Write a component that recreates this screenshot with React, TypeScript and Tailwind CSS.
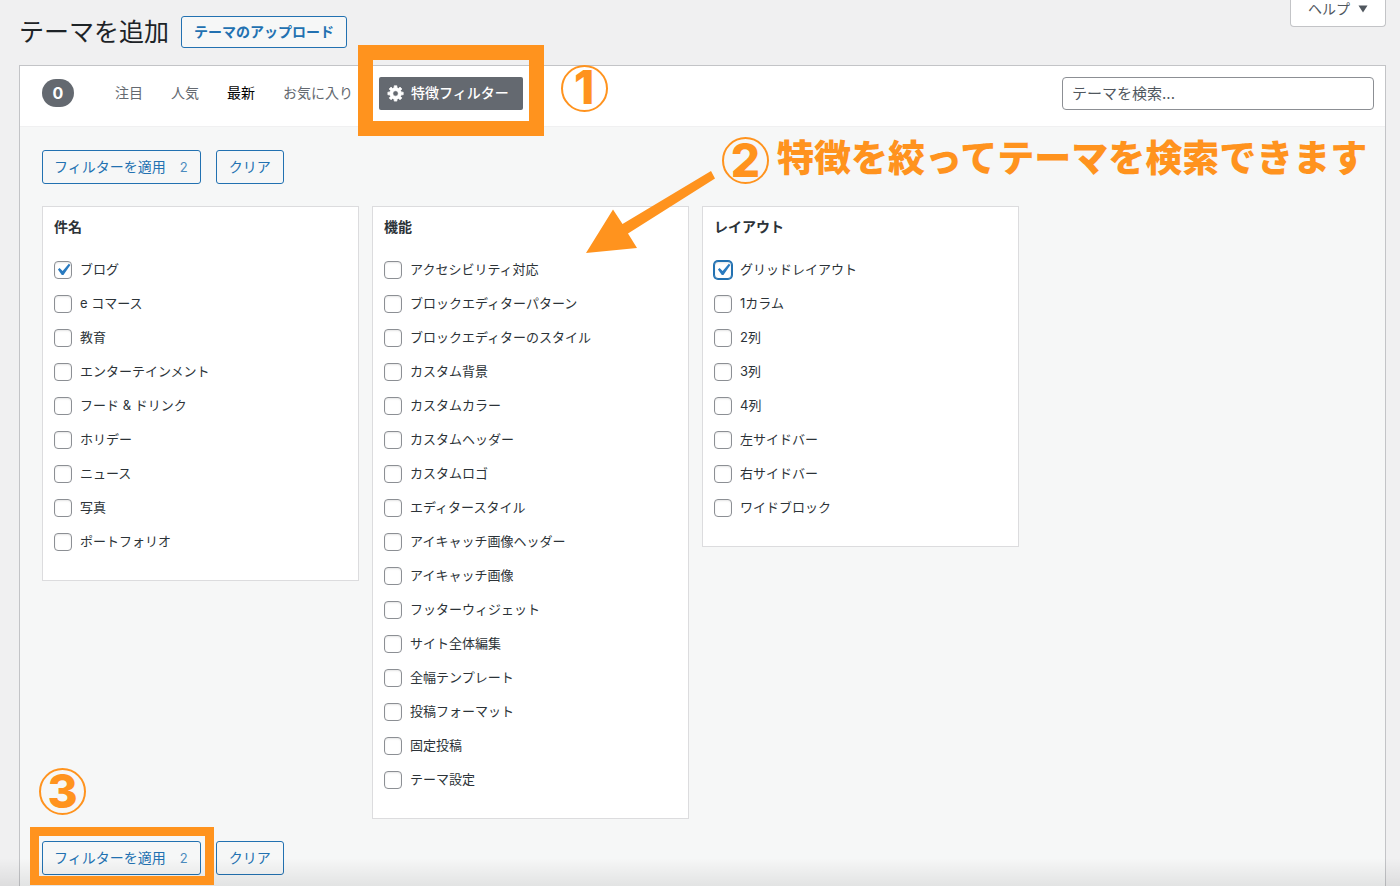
import { useState } from "react";
import clsx from "clsx";

const groups = [
  {
    title: "件名",
    items: [
      "ブログ",
      "e コマース",
      "教育",
      "エンターテインメント",
      "フード & ドリンク",
      "ホリデー",
      "ニュース",
      "写真",
      "ポートフォリオ",
    ],
  },
  {
    title: "機能",
    items: [
      "アクセシビリティ対応",
      "ブロックエディターパターン",
      "ブロックエディターのスタイル",
      "カスタム背景",
      "カスタムカラー",
      "カスタムヘッダー",
      "カスタムロゴ",
      "エディタースタイル",
      "アイキャッチ画像ヘッダー",
      "アイキャッチ画像",
      "フッターウィジェット",
      "サイト全体編集",
      "全幅テンプレート",
      "投稿フォーマット",
      "固定投稿",
      "テーマ設定",
    ],
  },
  {
    title: "レイアウト",
    items: [
      "グリッドレイアウト",
      "1カラム",
      "2列",
      "3列",
      "4列",
      "左サイドバー",
      "右サイドバー",
      "ワイドブロック",
    ],
  },
];

const tabs = ["注目", "人気", "最新", "お気に入り"];

const GearIcon = () => (
  <svg
    viewBox="0 0 20 20"
    className="size-[18px] fill-current stroke-current stroke-[0.8]"
    aria-hidden="true"
  >
    <path d="M18 12h-2.18c-.17.7-.44 1.35-.81 1.93l1.54 1.54-2.1 2.1-1.54-1.54c-.58.36-1.23.63-1.91.79V19H8v-2.18c-.68-.16-1.33-.43-1.91-.79l-1.54 1.54-2.12-2.12 1.54-1.54c-.36-.58-.63-1.23-.79-1.91H1V9.03h2.17c.16-.7.44-1.35.8-1.94L2.43 5.55l2.1-2.1 1.54 1.54c.58-.37 1.24-.64 1.93-.81V2h3v2.18c.68.16 1.33.43 1.91.79l1.54-1.54 2.12 2.12-1.54 1.54c.36.59.64 1.24.8 1.94H18V12zm-8.5 1.5c1.66 0 3-1.34 3-3s-1.34-3-3-3-3 1.34-3 3 1.34 3 3 3z" />
  </svg>
);

const StepNumber = ({ n }: { n: number }) => (
  <span className="flex size-[47px] shrink-0 items-center justify-center rounded-full border-2 border-[#ff931e] pb-0.5 text-[46px] leading-none font-extrabold text-[#ff931e]">
    {n}
  </span>
);

const FilterCheckbox = ({
  label,
  checked,
  focused,
  onChange,
}: {
  label: string;
  checked: boolean;
  focused: boolean;
  onChange: () => void;
}) => (
  <label className="flex h-[34px] items-center gap-2 text-[13px] text-[#2c3338]">
    <span className="relative size-[18px] shrink-0">
      <input
        type="checkbox"
        checked={checked}
        onChange={onChange}
        className={clsx(
          "block size-[18px] appearance-none rounded border bg-white shadow-[inset_0_1px_2px_rgba(0,0,0,0.1)]",
          focused ? "border-[#2271b1] ring-1 ring-[#2271b1]" : "border-[#8c8f94]",
        )}
      />
      {checked && (
        <svg
          viewBox="0 0 20 20"
          className="pointer-events-none absolute -inset-[3px] size-6 fill-[#2a7bc0]"
          aria-hidden="true"
        >
          <path d="M14.83 4.89l1.34.94-5.81 8.38H9.02L5.78 9.67l1.34-1.25 2.57 2.4z" />
        </svg>
      )}
    </span>
    {label}
  </label>
);

const FilterButtons = ({
  count,
  onClear,
  highlighted = false,
}: {
  count: number;
  onClear: () => void;
  highlighted?: boolean;
}) => (
  <div className="flex gap-[15px] text-sm text-[#2271b1]">
    <div className="relative">
      <button
        type="button"
        className="flex h-[34px] items-center gap-3.5 rounded-[3px] border border-[#2271b1] bg-[#f6f7f7] pr-3 pl-[11px]"
      >
        フィルターを適用
        <span className="text-[13px] opacity-80">{count}</span>
      </button>
      {highlighted && (
        <div className="pointer-events-none absolute -top-3.5 -right-[13px] -bottom-2.5 -left-3 z-10 border-9 border-[#ff931e]" />
      )}
    </div>
    <button
      type="button"
      onClick={onClear}
      className="h-[34px] rounded-[3px] border border-[#2271b1] bg-[#f6f7f7] px-3"
    >
      クリア
    </button>
  </div>
);

export default function App() {
  const [tab, setTab] = useState("最新");
  const [selected, setSelected] = useState(["ブログ", "グリッドレイアウト"]);
  const [lastToggled, setLastToggled] = useState("グリッドレイアウト");

  const toggle = (item: string) => {
    setSelected((prev) =>
      prev.includes(item) ? prev.filter((s) => s !== item) : [...prev, item],
    );
    setLastToggled(item);
  };

  const clear = () => setSelected([]);

  return (
    <div className="relative flex min-h-screen flex-col overflow-hidden bg-[#f0f0f1] pr-3.5 pl-[19px] font-['Inter','Noto_Sans_CJK_JP',sans-serif] text-[#2c3338]">
      <header className="flex h-[65px] items-start justify-between">
        <div className="flex items-center gap-3 pt-4">
          <h1 className="text-[25px] leading-8 text-[#1d2327]">テーマを追加</h1>
          <button
            type="button"
            className="h-8 rounded-[3px] border border-[#2271b1] bg-[#f6f7f7] px-3 text-sm font-bold text-[#2271b1]"
          >
            テーマのアップロード
          </button>
        </div>
        <button
          type="button"
          className="flex h-[27px] items-center gap-2 rounded-b border border-t-0 border-[#c3c4c7] bg-white px-[17px] pb-2 text-sm text-[#50575e]"
        >
          ヘルプ
          <svg viewBox="0 0 10 8" className="h-2 w-2.5 fill-current" aria-hidden="true">
            <path d="M0.5 0.5h9L5 7.5z" />
          </svg>
        </button>
      </header>

      <main className="flex-1 border border-b-0 border-[#c3c4c7] bg-[#f6f7f7]">
        <div className="flex h-[61px] items-center border-b border-[#f0f0f1] bg-white pr-[11px] pb-1.5 pl-[22px]">
          <span className="flex h-7 w-8 items-center justify-center rounded-full bg-[#646970] text-base font-bold text-white">
            0
          </span>
          <nav className="ml-[41px] flex gap-7 text-sm">
            {tabs.map((name) => (
              <a
                key={name}
                href="#"
                onClick={() => setTab(name)}
                className={tab === name ? "text-black" : "text-[#646970]"}
              >
                {name}
              </a>
            ))}
          </nav>
          <div className="relative ml-[26px]">
            <button
              type="button"
              className="flex h-[33px] items-center gap-1.5 rounded-xs bg-[#646970] pr-3.5 pl-2 text-sm font-medium text-white"
            >
              <GearIcon />
              特徴フィルター
            </button>
            {/* Step 1 */}
            <div className="pointer-events-none absolute -inset-x-[21px] -top-8 -bottom-[26px] z-10 border-15 border-[#ff931e]" />
            <div className="absolute -top-3 left-full z-10 ml-[38px]">
              <StepNumber n={1} />
            </div>
          </div>
          <input
            type="search"
            aria-label="テーマを検索"
            placeholder="テーマを検索..."
            className="ml-auto h-[33px] w-[312px] rounded border border-[#8c8f94] bg-white px-[9px] text-[15px] placeholder:text-[#50575e]"
          />
        </div>

        <div className="relative px-[22px] pt-[23px] pb-[11px]">
          <FilterButtons count={selected.length} onClear={clear} />

          <div className="my-[22px] flex items-start gap-[13px]">
            {groups.map((group) => (
              <fieldset
                key={group.title}
                className="w-[24%] border border-[#dcdcde] bg-white px-[11px] pt-2.5 pb-[21px]"
              >
                <legend className="float-left mb-4 w-full text-sm leading-5 font-bold">
                  {group.title}
                </legend>
                <div className="clear-both">
                  {group.items.map((item) => (
                    <FilterCheckbox
                      key={item}
                      label={item}
                      checked={selected.includes(item)}
                      focused={lastToggled === item}
                      onChange={() => toggle(item)}
                    />
                  ))}
                </div>
              </fieldset>
            ))}
          </div>

          <FilterButtons count={selected.length} onClear={clear} highlighted />

          {/* Step 2 */}
          <div className="absolute top-2.5 left-[702px] flex items-start gap-2 whitespace-nowrap text-[#ff931e]">
            <StepNumber n={2} />
            <p className="text-[37px] leading-11 font-black">特徴を絞ってテーマを検索できます</p>
          </div>
          <svg
            viewBox="0 0 130 84"
            className="pointer-events-none absolute top-[43px] left-[565px] h-[84px] w-[130px] fill-[#ff931e]"
            aria-hidden="true"
          >
            <path d="M1 83L28 39.5 37.5 54 126 1l4 7.5-87 55L52 78z" />
          </svg>

          {/* Step 3 */}
          <div className="absolute bottom-[71px] left-[19px]">
            <StepNumber n={3} />
          </div>
        </div>
      </main>

      <div className="pointer-events-none absolute inset-x-0 bottom-0 h-7 bg-linear-to-b from-transparent to-black/8" />
    </div>
  );
}
